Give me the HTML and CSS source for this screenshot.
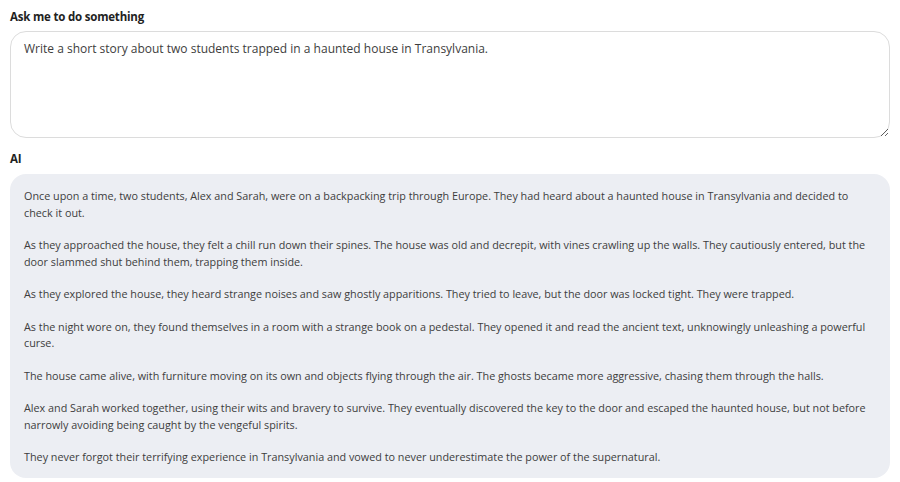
FILE: index.html
```html
<!DOCTYPE html>
<html lang="en">
<head>
    <meta charset="UTF-8">
    <title>Ask AI</title>
    <link rel="stylesheet" href="styles.css">
</head>
<body>
    <div class="panel">
        <label class="label" for="prompt">Ask me to do something</label>
        <textarea id="prompt" class="prompt">Write a short story about two students trapped in a haunted house in Transylvania.</textarea>

        <div class="label label-ai">AI</div>
        <div class="answer">
            <p>Once upon a time, two students, Alex and Sarah, were on a backpacking trip through Europe. They had heard about a haunted house in Transylvania and decided to check it out.</p>
            <p>As they approached the house, they felt a chill run down their spines. The house was old and decrepit, with vines crawling up the walls. They cautiously entered, but the door slammed shut behind them, trapping them inside.</p>
            <p>As they explored the house, they heard strange noises and saw ghostly apparitions. They tried to leave, but the door was locked tight. They were trapped.</p>
            <p>As the night wore on, they found themselves in a room with a strange book on a pedestal. They opened it and read the ancient text, unknowingly unleashing a powerful curse.</p>
            <p>The house came alive, with furniture moving on its own and objects flying through the air. The ghosts became more aggressive, chasing them through the halls.</p>
            <p>Alex and Sarah worked together, using their wits and bravery to survive. They eventually discovered the key to the door and escaped the haunted house, but not before narrowly avoiding being caught by the vengeful spirits.</p>
            <p>They never forgot their terrifying experience in Transylvania and vowed to never underestimate the power of the supernatural.</p>
        </div>
    </div>
</body>
</html>
```

FILE: styles.css
```css
body {
    margin: 0;
    background-color: #fff;
    color: #3d3d3d;
    font-family: "Open Sans", sans-serif;
}

.panel {
    padding: 9px 10px 4px 10px;
}

.label {
    display: block;
    font-family: "Open Sans", sans-serif;
    font-weight: 700;
    font-size: 11.5px;
    line-height: 15px;
    letter-spacing: -0.2px;
    color: #222;
    margin-bottom: 7px;
}

.label-ai {
    margin-bottom: 8px;
}

.prompt {
    display: block;
    box-sizing: border-box;
    width: 100%;
    height: 107px;
    margin-bottom: 13px;
    padding: 9px 13px;
    font-family: "Open Sans", sans-serif;
    font-size: 12px;
    line-height: 16px;
    color: #3d3d3d;
    border: 1px solid #dcdcdc;
    border-radius: 16px;
    outline: none;
    resize: vertical;
}

.answer {
    background-color: #eceef3;
    border-radius: 16px;
    padding: 14px 14px 12px 14px;
    font-size: 10.8px;
    line-height: 16.5px;
}

.answer p {
    margin: 0 0 16px 0;
}

.answer p:last-child {
    margin-bottom: 0;
}
```
